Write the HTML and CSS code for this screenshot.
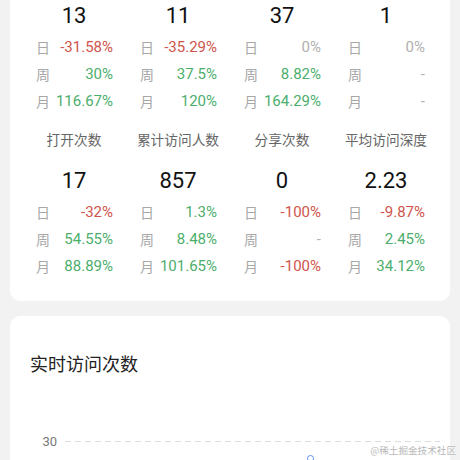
FILE: index.html
```html
<!DOCTYPE html>
<html lang="zh">
<head>
<meta charset="utf-8">
<link rel="stylesheet" href="styles.css">
</head>
<body>
<div class="page">
  <section class="card stats-card">
    <div class="grid first">
      <div class="stat">
        <div class="num">13</div>
        <div class="row"><span class="k">日</span><span class="v red">-31.58%</span></div>
        <div class="row"><span class="k">周</span><span class="v green">30%</span></div>
        <div class="row"><span class="k">月</span><span class="v green">116.67%</span></div>
      </div>
      <div class="stat">
        <div class="num">11</div>
        <div class="row"><span class="k">日</span><span class="v red">-35.29%</span></div>
        <div class="row"><span class="k">周</span><span class="v green">37.5%</span></div>
        <div class="row"><span class="k">月</span><span class="v green">120%</span></div>
      </div>
      <div class="stat">
        <div class="num">37</div>
        <div class="row"><span class="k">日</span><span class="v gray">0%</span></div>
        <div class="row"><span class="k">周</span><span class="v green">8.82%</span></div>
        <div class="row"><span class="k">月</span><span class="v green">164.29%</span></div>
      </div>
      <div class="stat">
        <div class="num">1</div>
        <div class="row"><span class="k">日</span><span class="v gray">0%</span></div>
        <div class="row"><span class="k">周</span><span class="v gray">-</span></div>
        <div class="row"><span class="k">月</span><span class="v gray">-</span></div>
      </div>
    </div>
    <div class="grid second">
      <div class="stat">
        <div class="label">打开次数</div>
        <div class="num">17</div>
        <div class="row"><span class="k">日</span><span class="v red">-32%</span></div>
        <div class="row"><span class="k">周</span><span class="v green">54.55%</span></div>
        <div class="row"><span class="k">月</span><span class="v green">88.89%</span></div>
      </div>
      <div class="stat">
        <div class="label">累计访问人数</div>
        <div class="num">857</div>
        <div class="row"><span class="k">日</span><span class="v green">1.3%</span></div>
        <div class="row"><span class="k">周</span><span class="v green">8.48%</span></div>
        <div class="row"><span class="k">月</span><span class="v green">101.65%</span></div>
      </div>
      <div class="stat">
        <div class="label">分享次数</div>
        <div class="num">0</div>
        <div class="row"><span class="k">日</span><span class="v red">-100%</span></div>
        <div class="row"><span class="k">周</span><span class="v gray">-</span></div>
        <div class="row"><span class="k">月</span><span class="v red">-100%</span></div>
      </div>
      <div class="stat">
        <div class="label">平均访问深度</div>
        <div class="num">2.23</div>
        <div class="row"><span class="k">日</span><span class="v red">-9.87%</span></div>
        <div class="row"><span class="k">周</span><span class="v green">2.45%</span></div>
        <div class="row"><span class="k">月</span><span class="v green">34.12%</span></div>
      </div>
    </div>
  </section>

  <section class="card chart-card">
    <h2 class="title">实时访问次数</h2>
    <div class="chart">
      <div class="axis-row">
        <span class="axis-label">30</span>
        <span class="axis-line"></span>
      </div>
      <span class="dot"></span>
    </div>
  </section>
</div>
<div class="watermark">@稀土掘金技术社区</div>
</body>
</html>
```

FILE: styles.css
```css
html, body {
  margin: 0;
  padding: 0;
}
body {
  background: #f2f2f2;
  font-family: Roboto, "Noto Sans CJK SC", sans-serif;
  width: 460px;
  height: 460px;
  overflow: hidden;
  position: relative;
}
.page {
  padding: 0 10px;
  display: flex;
  flex-direction: column;
  gap: 15px;
}
.card {
  background: #fff;
  border-radius: 10px;
}
.stats-card {
  margin-top: -20px;
  padding: 21px 12px 22px;
}
.grid {
  display: grid;
  grid-template-columns: repeat(4, 1fr);
}
.grid.second {
  margin-top: 15px;
}
.stat {
  display: flex;
  flex-direction: column;
}
.label {
  text-align: center;
  font-size: 13.7px;
  line-height: 22px;
  color: #666;
  margin-bottom: 15px;
}
.num {
  text-align: center;
  font-size: 22px;
  line-height: 30px;
  color: #111;
  margin-bottom: 2px;
}
.row {
  display: flex;
  justify-content: space-between;
  padding: 0 13px 0 14px;
  height: 27px;
  align-items: center;
  font-size: 15px;
}
.k {
  color: #a8a8a8;
  font-size: 14px;
}
.v.red { color: #d0544c; }
.v.green { color: #4cae6c; }
.v.gray { color: #b0b0b0; }

.chart-card {
  padding: 36px 10px 0 20px;
  height: 300px;
}
.title {
  margin: 0;
  font-size: 18px;
  font-weight: 400;
  line-height: 26px;
  color: #222;
}
.chart {
  position: relative;
  margin-top: 54px;
}
.axis-row {
  display: flex;
  align-items: center;
  gap: 8px;
  height: 18px;
}
.axis-label {
  width: 27px;
  text-align: right;
  font-size: 13px;
  color: #777;
}
.axis-line {
  flex: 1;
  height: 1px;
  background: repeating-linear-gradient(to right, #dcdcdc 0 6px, transparent 6px 10px);
}
.dot {
  position: absolute;
  left: 277px;
  top: 23px;
  width: 5px;
  height: 5px;
  border: 1.5px solid #5b8ff0;
  border-radius: 50%;
  background: #fff;
}
.watermark {
  position: absolute;
  right: 4px;
  bottom: 3px;
  font-size: 9.6px;
  color: #b8b8b8;
  font-family: "Noto Sans CJK SC", sans-serif;
  text-shadow: 0 0 2px #fff;
}
```
